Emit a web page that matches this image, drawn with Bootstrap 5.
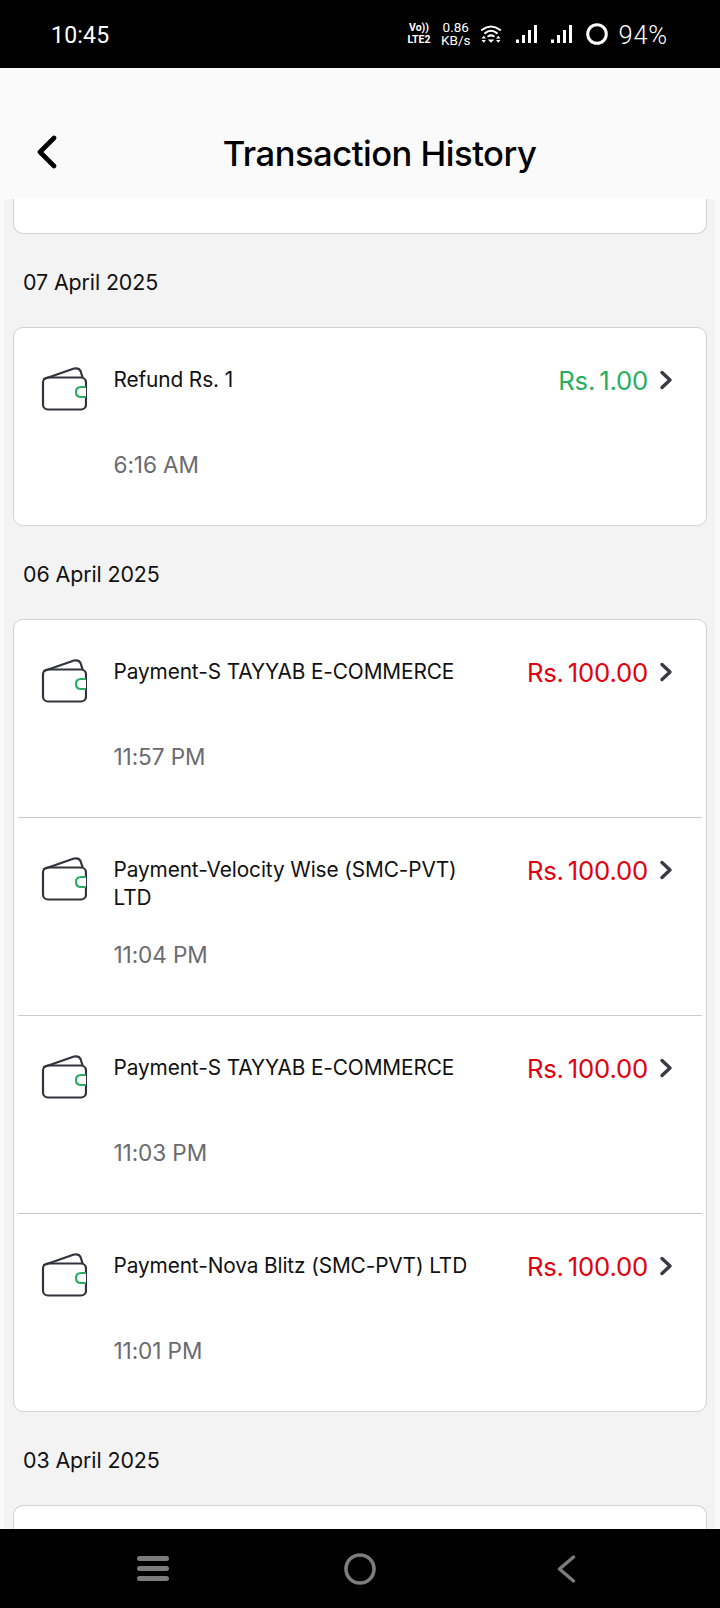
<!DOCTYPE html>
<html lang="en">
<head>
<meta charset="utf-8">
<title>Transaction History</title>
<link href="https://cdn.jsdelivr.net/npm/bootstrap@5.3.0/dist/css/bootstrap.min.css" rel="stylesheet">
<style>
html,body{margin:0;height:1608px;overflow:hidden;background:#fafafa;font-family:Inter,"Liberation Sans",sans-serif}
.phone{height:1608px;width:720px}
.sysbar{height:68px;background:#000;color:#fff;flex:none;padding:0 52px 0 51px}
.clock{font-size:23px;font-family:Roboto,sans-serif;font-weight:400;letter-spacing:.2px;margin-top:4px}
.batt{font-size:25.5px;font-family:Roboto,sans-serif;font-weight:300;letter-spacing:.8px;margin-left:10px;margin-top:3px}
.vol{font-size:10.5px;line-height:12px;font-weight:700;font-family:Roboto,sans-serif;text-align:center;width:24px}
.kbs{font-size:13.5px;line-height:13px;font-family:Roboto,sans-serif;text-align:center;margin-left:10px}
.gap-wifi{margin-left:10px}
.gap-bar{margin-left:14px}
.apphead{height:131px;background:#fafafa;flex:none;padding-top:38px}
.apphead h1{font-size:34.6px;font-weight:500;color:#000;margin:0 20px 0 0;line-height:80px;letter-spacing:-.5px}
.backbtn{margin-left:35px;margin-top:-2px;flex:none}
.scrollarea{flex:1 1 auto;min-height:0;overflow:hidden;background:#f3f3f3;margin:0 5px 0 4px;padding:0 8px 0 9px}
.tcard{background:#fff;border:1px solid #d2d2d2;border-radius:10px;padding:0 4px}
.tcard-end{height:35px;border-top:0;border-radius:0 0 10px 10px}
.tcard-open{border-bottom:0;border-radius:10px 10px 0 0;height:40px}
.datehead{height:93px;padding-left:10px;font-size:21.4px;color:#111;line-height:30px;padding-top:33px;letter-spacing:-.1px}
.trow{height:198px;padding:39px 0 0 23px}
.trow+.trow{border-top:1px solid #c9c9c9}
.firstrow{height:197px}
.wic{width:46px;height:46px;flex:none;margin-top:-1px}
.tbody{width:360px;margin-left:26.5px}
.ttl{font-size:20.8px;line-height:28px;color:#111;height:56px;margin-top:-1px;letter-spacing:-.1px}
.ttime{font-size:22.6px;line-height:28px;color:#6a6a70;margin-top:29px;letter-spacing:-.1px}
.tamt{font-size:25.7px;font-weight:425;line-height:30px;margin-left:auto;margin-top:-1.5px;letter-spacing:-.2px;word-spacing:-3px}
.amt-in{color:#27ae60}.amt-out{color:#e0000f}
.chev{flex:none;margin:3px 29px 0 11px}
.navbar-sys{height:79px;background:#000;flex:none;padding:0 0 0 137px}
.nav-home{margin-left:175px}
.nav-back{margin-left:181px}
</style>
</head>
<body>
<svg width="0" height="0" class="position-absolute">
<symbol id="wallet" viewBox="0 0 46 46">
<path d="M3 13 L33 2.5 Q38 1.5 39.5 5 L41.5 11" fill="none" stroke="#32323c" stroke-width="2.2" stroke-linejoin="round" stroke-linecap="round"/>
<rect x="2" y="11.5" width="43" height="32" rx="5" fill="none" stroke="#32323c" stroke-width="2.2"/>
<path d="M45 21 H40 Q35 21 35 26 Q35 31 40 31 H45" fill="#fff" stroke="#27ae60" stroke-width="2.2"/>
</symbol>
<symbol id="chevr" viewBox="0 0 14 20"><path d="M3 2.5 L11 10 L3 17.5" fill="none" stroke="#3a3a44" stroke-width="3.4" stroke-linecap="round" stroke-linejoin="round"/></symbol>
<symbol id="sig" viewBox="0 0 21 18"><g fill="#fff"><rect x="0" y="14.5" width="3" height="3.5"/><rect x="6" y="10" width="3" height="8"/><rect x="12" y="5" width="3" height="13"/><rect x="18" y="0" width="3" height="18"/></g></symbol>
</svg>
<div class="phone d-flex flex-column">
  <div class="sysbar d-flex align-items-center">
    <span class="clock">10:45</span>
    <div class="ms-auto d-flex align-items-center">
      <div class="vol">Vo))<br>LTE2</div>
      <div class="kbs">0.86<br>KB/s</div>
      <svg class="gap-wifi" width="22" height="20" viewBox="0 0 24 22"><g fill="none" stroke="#fff" stroke-width="2.2" stroke-linecap="round"><path d="M2 6.5 Q12 -1 22 6.5"/><path d="M5.5 10 Q12 5 18.5 10"/><path d="M9 13.5 Q12 11.5 15 13.500"/></g><path d="M1.5 16 h5 l-2.5 -3z M8.5 17 h7 l-3.5 3.5z M17.5 16 l2.5 -3 2.5 3z M1.5 17.5 h5 l-2.5 3z M17.5 17.5 h5 l-2.5 3z" fill="#fff"/></svg>
      <svg class="gap-bar" width="21" height="18"><use href="#sig"/></svg>
      <svg class="gap-bar" width="21" height="18"><use href="#sig"/></svg>
      <svg class="gap-bar" width="22" height="22" viewBox="0 0 22 22"><circle cx="11" cy="11" r="9.3" fill="none" stroke="#fff" stroke-width="3"/></svg>
      <span class="batt">94%</span>
    </div>
  </div>
  <header class="apphead d-flex align-items-center">
    <svg class="backbtn" width="24" height="34" viewBox="0 0 24 34"><path d="M19 3 L5 17 L19 31" fill="none" stroke="#000" stroke-width="4.6" stroke-linecap="round" stroke-linejoin="round"/></svg>
    <h1 class="flex-grow-1 text-center">Transaction History</h1>
  </header>
  <main class="scrollarea">
    <div class="tcard tcard-end"></div>
    <div class="datehead">07 April 2025</div>
    <div class="tcard">
      <div class="trow firstrow d-flex">
        <svg class="wic"><use href="#wallet"/></svg>
        <div class="tbody"><div class="ttl">Refund Rs. 1</div><div class="ttime">6:16 AM</div></div>
        <div class="tamt amt-in">Rs. 1.00</div>
        <svg class="chev" width="14" height="20"><use href="#chevr"/></svg>
      </div>
    </div>
    <div class="datehead">06 April 2025</div>
    <div class="tcard">
      <div class="trow firstrow d-flex">
        <svg class="wic"><use href="#wallet"/></svg>
        <div class="tbody"><div class="ttl">Payment-S TAYYAB E-COMMERCE</div><div class="ttime">11:57 PM</div></div>
        <div class="tamt amt-out">Rs. 100.00</div>
        <svg class="chev" width="14" height="20"><use href="#chevr"/></svg>
      </div>
      <div class="trow d-flex">
        <svg class="wic"><use href="#wallet"/></svg>
        <div class="tbody"><div class="ttl">Payment-Velocity Wise (SMC-PVT) LTD</div><div class="ttime">11:04 PM</div></div>
        <div class="tamt amt-out">Rs. 100.00</div>
        <svg class="chev" width="14" height="20"><use href="#chevr"/></svg>
      </div>
      <div class="trow d-flex">
        <svg class="wic"><use href="#wallet"/></svg>
        <div class="tbody"><div class="ttl">Payment-S TAYYAB E-COMMERCE</div><div class="ttime">11:03 PM</div></div>
        <div class="tamt amt-out">Rs. 100.00</div>
        <svg class="chev" width="14" height="20"><use href="#chevr"/></svg>
      </div>
      <div class="trow d-flex">
        <svg class="wic"><use href="#wallet"/></svg>
        <div class="tbody"><div class="ttl">Payment-Nova Blitz (SMC-PVT) LTD</div><div class="ttime">11:01 PM</div></div>
        <div class="tamt amt-out">Rs. 100.00</div>
        <svg class="chev" width="14" height="20"><use href="#chevr"/></svg>
      </div>
    </div>
    <div class="datehead">03 April 2025</div>
    <div class="tcard tcard-open"></div>
  </main>
  <div class="navbar-sys d-flex align-items-center">
    <svg width="32" height="25" viewBox="0 0 32 25" fill="#7c7c7c"><rect x="0" y="0" width="32" height="5" rx="2.5"/><rect x="0" y="10" width="32" height="5" rx="2.5"/><rect x="0" y="20" width="32" height="5" rx="2.5"/></svg>
    <svg class="nav-home" width="32" height="32" viewBox="0 0 32 32"><circle cx="16" cy="16" r="14" fill="none" stroke="#7c7c7c" stroke-width="3.6"/></svg>
    <svg class="nav-back" width="19" height="28" viewBox="0 0 19 28"><path d="M16.5 2 L2.5 14 L16.5 26" fill="none" stroke="#7c7c7c" stroke-width="3.4" stroke-linecap="round" stroke-linejoin="round"/></svg>
  </div>
</div>
<script src="https://cdn.jsdelivr.net/npm/bootstrap@5.3.0/dist/js/bootstrap.bundle.min.js"></script>
</body>
</html>
